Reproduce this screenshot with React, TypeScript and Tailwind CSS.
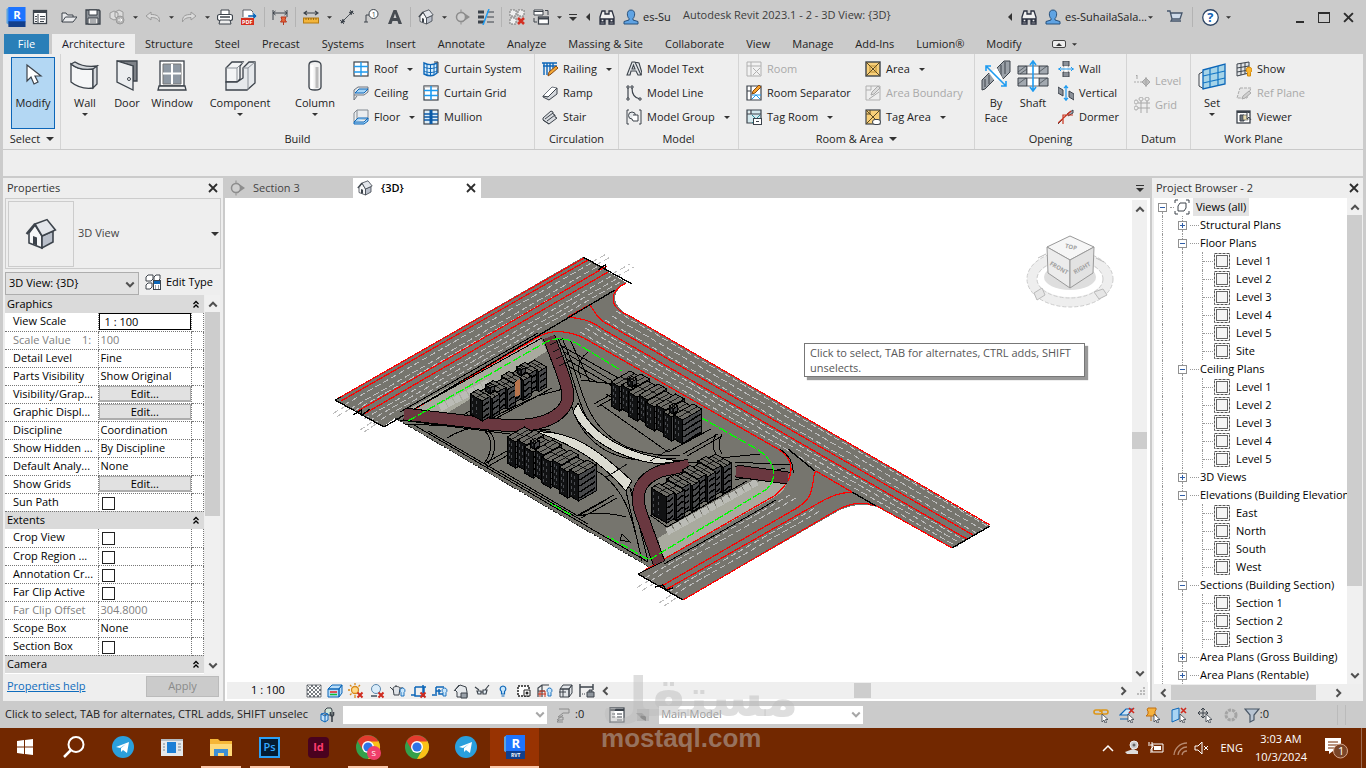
import { Fragment } from 'react';
import type { ReactNode } from 'react';

// --- ICON DRAWINGS (16 unit grid) ---
const ink = '#3c434b';
const blue = '#0c66b8';
const sky = '#1e9bf0';

const arrowCursor = <path d="M9 7v8l2-2 1 3 1.500-.5-1-3h2.500z" fill="#fff" stroke={ink} strokeWidth="0.800" />;
const redCross = <path d="M9.500 9.500l5 5m0-5l-5 5" stroke="#cf2a1e" strokeWidth="2" />;
const bulb = <path d="M12.500 5a2.500 2.500 0 0 1 1.500 4.500V13h-3V9.500A2.500 2.500 0 0 1 12.500 5z" fill="#c9e6fb" stroke={blue} strokeWidth="0.900" />;

const glyphs: Record<string, ReactNode> = {
  palette: <><rect x="1.500" y="1.500" width="13" height="13" fill="#fff" stroke={ink} strokeWidth="1.300" /><path d="M1 3h14" stroke={ink} strokeWidth="2" /><path d="M6 5v9M8 7.500h5M8 10h5M8 12.500h4M3 7.500h2M3 10h2M3 12.500h2" stroke={ink} /></>,
  open: <path d="M1 13V4h4l1.500 2H12v2m-11 5l3.500-5H16l-4 5z" fill="#e9eaec" stroke={ink} />,
  save: <><path d="M1 1h13l1 1v13H1z" fill="#8b9096" stroke={ink} strokeWidth="1.300" /><path d="M4 1h8v5H4z" fill="#fff" stroke={ink} /><path d="M3 9h10v6H3z" fill="#e6e6e6" stroke={ink} /><path d="M5 11h6M5 13h6" stroke={ink} strokeWidth="0.700" /></>,
  sync: <><path d="M1 4l4-2 4 2v5l-4 2-4-2zM6 3l4-2 4 2v5l-4 2-4-2z" fill="#dcdcdc" stroke="#9a9a9a" /><circle cx="11" cy="11" r="4" fill="#b5b5b5" stroke="#999" /><path d="M9 11h4m-1.500-1.500L13 11l-1.500 1.500" stroke="#fff" fill="none" /></>,
  undo: <path d="M1 7l5-4v2.500c5 0 9 1 8.500 7.500C13 9.500 10 8.500 6 8.500V11z" fill="#dadada" stroke="#9b9b9b" />,
  redo: <path d="M15 7l-5-4v2.500c-5 0-9 1-8.500 7.500C3 9.500 6 8.500 10 8.500V11z" fill="#dadada" stroke="#9b9b9b" />,
  print: <><path d="M4 6V1h8v5" fill="#fff" stroke={ink} /><rect x="0.500" y="5.500" width="15" height="6" rx="2" fill="#fff" stroke={ink} strokeWidth="1.200" /><path d="M3 8h10" stroke={ink} strokeWidth="1.500" /><path d="M3 11h10l1 4H2z" fill="#eee" stroke={ink} /></>,
  pdf: <><path d="M2 8V1h8l2 2v5" fill="#fff" stroke={ink} strokeWidth="0.800" /><path d="M7 6h5V3l4 4-4 4V8H7z" fill={blue} stroke="#fff" strokeWidth="0.400" /><rect y="9" width="13" height="7" fill="#d5301f" /><text x="1" y="15" fontSize="5.500" fontWeight="700" fill="#fff">PDF</text></>,
  lock: <><path d="M1 1v10M15 1v7M1 4h14M3.500 2L1 4l2.500 2M12.500 2L15 4l-2.500 2" fill="none" stroke={ink} /><path d="M9 8h5l-1 3 1.500 2h-6L10 11z" fill="#e8663a" stroke="#b6371e" /><path d="M11.500 13v3" stroke="#b6371e" /></>,
  measure: <><path d="M1 4h14M4 2L1 4l3 2M12 2l3 2-3 2" fill="none" stroke={ink} strokeWidth="1.200" /><rect x="0.500" y="9" width="15" height="5" fill="#f3b53b" stroke="#b57b12" /><path d="M3 9v2M5.500 9v2M8 9v2M10.500 9v2M13 9v2" stroke="#7a5207" strokeWidth="0.700" /></>,
  aligned: <path d="M2 14L14 2M1 11l4 4M11 1l4 4M4 10l-2 4 4-1.500M12 6l2-4-4 1.500" fill={ink} stroke={ink} strokeWidth="0.900" />,
  tag: <><circle cx="10.500" cy="5" r="4.500" fill="#fff" stroke={ink} /><text x="8.800" y="7.500" fontSize="7" fill={ink}>1</text><path d="M6 6H3v7M1 13h4" stroke={ink} fill="none" /></>,
  text: <path d="M1 15L6.500 1h3L15 15h-3.500l-1-3h-5l-1 3zM6.500 9h3L8 4.500z" fill="#474c52" />,
  house: <><path d="M2 7.500L5 3.500l3.500 5.500v6L2 12.500z" fill="#f6f7f8" stroke={ink} strokeWidth="0.800" /><path d="M8.500 9l5.500-2.500V12l-5.500 3z" fill="#b9bfca" stroke={ink} strokeWidth="0.800" /><path d="M5 3l6-2.200L15.200 6 8.500 9z" fill="#e3e6eb" stroke={ink} strokeWidth="0.800" /><path d="M0.800 8L5 3" stroke={ink} strokeWidth="1.200" /><path d="M4 9l2 .8v4L4 13z" fill={ink} /></>,
  section: <><path d="M8 2.500L16 8l-8 5.500z" fill="#8d8d8d" /><circle cx="7" cy="8" r="4.500" fill="#cfcfcf" stroke="#8d8d8d" strokeWidth="1.500" /><path d="M7 0.500v3M7 12.500v3" stroke="#8d8d8d" /></>,
  thin: <><path d="M0 3h6M0 8h6M0 13h6" stroke={ink} strokeWidth="3" /><path d="M9 3h7M9 8h7M9 13h7" stroke={ink} /><path d="M11 0L5 16" stroke={sky} strokeWidth="1.500" /></>,
  closeViews: <><path d="M1 1h6v6H1zM9 1h6v6H9zM1 9h6v6H1z" fill="#eee" stroke="#777" strokeDasharray="2 1" /><path d="M9 9l6 6m0-6l-6 6" stroke="#d32f22" strokeWidth="2.500" /></>,
  switchViews: <><path d="M1 1h9v5H1zM1 2.500h9" fill="#fff" stroke={ink} /><rect x="5.500" y="8" width="10" height="7" fill="#fff" stroke={ink} strokeWidth="1.300" /><path d="M5 9.500h11" stroke={ink} strokeWidth="2" /><path d="M12 1.500h3V6M1 9v4h3" fill="none" stroke={ink} /></>,
  binoculars: <path d="M1 8l2-6h3v3h4V2h3l2 6v7h-5v-5H6v5H1zM2 10h3v3H2zM11 10h3v3h-3z" fill="#f0f0f0" stroke="#2b3140" strokeWidth="1.300" />,
  user: <path d="M8 1c5 0 4 7 2 8.500V11l5 1.500V15H1v-2.500L6 11V9.500C4 8 3 1 8 1z" fill="#5fa3e3" stroke="#27507c" />,
  cart: <path d="M0 2h3l2 8h8l2-6H4M5 10l-1 2h10" fill="#cfdbea" stroke="#46566b" strokeWidth="1.300" />,
  help: <><circle cx="8" cy="8" r="7.300" fill="#fff" stroke="#2d4565" strokeWidth="1.200" /><text x="5" y="12.500" fontSize="12" fontWeight="700" fill="#1261b3">?</text></>,
  roof: <><rect x="1" y="1" width="14" height="14" fill="#fff" stroke={ink} strokeWidth="1.200" /><path d="M8 1v14M1 5.500h14M1 11h14" stroke={sky} strokeWidth="1.400" /></>,
  ceiling: <><path d="M1 5l4-3h10v5l-4 3H1zM1 10v5l3-4" fill="#e4e7ea" stroke="#707780" /><path d="M2 8l4-4h9l-4 4z" fill="#a8d6f7" stroke={blue} /></>,
  floor: <><path d="M4 1h11v9H4zM4 1L1 4v9" fill="#e9ecef" stroke="#838a92" /><path d="M1 13l4-4h10l-4 4zM1 13v2h10l4-3V9" fill="#a8d6f7" stroke={blue} /></>,
  curtainSystem: <><path d="M1 2c4 2 9 2 13 0v10c-4 4-9 3-13 1z" fill="#d8effd" stroke={blue} strokeWidth="1.400" /><path d="M4 3v12M7.500 3v12M11 3v11M1 6c4 2 9 2 13 0M1 10c4 2 9 2 13 0" stroke={blue} fill="none" /><path d="M11 1h4v11" stroke={ink} fill="none" /></>,
  curtainGrid: <><rect x="1" y="1" width="14" height="14" fill="#fff" stroke={ink} strokeWidth="1.200" /><path d="M1 2h14" stroke="#bbb" /><path d="M8 1v14M1 5.500h14M1 10.500h14" stroke={sky} strokeWidth="1.600" /></>,
  mullion: <><rect x="1" y="1" width="14" height="14" fill="#dceefa" stroke={ink} strokeWidth="1.200" /><path d="M8 1v14" stroke="#0b5aa6" strokeWidth="3" /><path d="M1 5h14M1 8h14M1 11h14" stroke="#0b5aa6" strokeWidth="1.400" /></>,
  railing: <><path d="M0 2h15M1 5h14M2 2v12M5 2v12M8 2v12M11 2v6" stroke={blue} strokeWidth="1.400" /><path d="M6 15l1-4 7-6 2 2-7 6z" fill="#f4a836" stroke="#8c4b11" /></>,
  ramp: <><path d="M1 11l9-9 5 1-9 9z" fill="#fff" stroke="#6c737b" /><path d="M6 12l9-9v6l-8 6-6-3v-1z" fill="#d6d9dd" stroke={ink} /></>,
  stair: <><path d="M1 9l8-7 2 1v2l2 1v2l2 1-8 6-6-4z" fill="#d9dce0" stroke={ink} /><path d="M3 10l8-6M5 12l8-6M1 11l6 4" stroke={ink} fill="none" /></>,
  modelText: <path d="M1 14L6 1h3l6 13h-3l-2-4H5l-1 4zM6 8h3L7.500 4zM9 1l4 1 3 10-1 2" fill="#e5e8eb" stroke={ink} strokeWidth="1.100" />,
  modelLine: <><path d="M2 3v11M6 3c0 6 2 10 8 11" stroke={ink} fill="none" strokeWidth="1.200" /><path d="M1 1h2v2H1zM1 13h2v2H1zM5 1h2v2H5zM13 13h2v2h-2z" fill="#fff" stroke={ink} /></>,
  modelGroup: <><path d="M3 1H1v14h2M13 1h2v14h-2" stroke={ink} fill="none" /><circle cx="6" cy="6.500" r="3.500" fill="#e5e8eb" stroke={ink} /><path d="M7 6h5v6H7l-1-2" fill="#fff" stroke={ink} /></>,
  roomOff: <><path d="M1 1h14v14H1zM1 5h4V1M5 5h10M5 5v10" fill="#f2f2f2" stroke="#b0b0b0" /><path d="M7 7l7 7m0-7l-7 7" stroke="#b0b0b0" /></>,
  roomSep: <><path d="M1 1h14v14H1zM5 1v14M1 6h4" fill="#fff" stroke={ink} strokeWidth="1.200" /><path d="M6 14l4-4 4 4M6 10h9" stroke={sky} fill="none" /><path d="M6 9l1-3 6-6 2 2-6 6z" fill="#f6a22c" stroke="#8a4a10" /></>,
  tagRoom: <><path d="M1 1h14v13H1zM1 5h4V1M5 5h10" fill="#d4e9ee" stroke={ink} strokeWidth="1.200" /><path d="M6 6l6 6m2-6l-8 8" stroke="#2a8b97" /><rect x="7.500" y="9.500" width="8" height="6" fill="#fff" stroke={ink} /><path d="M10 12.500h3" stroke={ink} /></>,
  area: <><rect x="1" y="1" width="14" height="14" fill="#f8cf78" stroke={ink} strokeWidth="1.400" /><path d="M1 1l14 14m0-14L1 15" stroke="#5c4a25" /><path d="M5 5h6v6H5z" fill="none" stroke="#a37416" strokeWidth="0.700" /></>,
  areaOff: <><path d="M1 1h14v14H1zM1 5h5V1" fill="#eee" stroke="#b0b0b0" /><path d="M6 10l1-3 6-6 2 2-6 6zM4 14l10-7" fill="#ddd" stroke="#aaa" /></>,
  tagArea: <><rect x="1" y="1" width="14" height="14" fill="#f8cf78" stroke={ink} strokeWidth="1.200" /><path d="M1 1l14 14m0-14L1 15M5 1v4H1" stroke="#5c4a25" fill="none" /><rect x="7.500" y="10.500" width="8" height="5" rx="2.500" fill="#fff" stroke={ink} /></>,
  openWall: <><path d="M5 0h6v5H5zM5 11h6v5H5z" fill="#8b9199" stroke={ink} /><path d="M6 5h4v6H6z" fill="#fff" stroke="#bbb" strokeWidth="0.500" /><path d="M0 8h16M3 6L1 8l2 2M13 6l2 2-2 2" stroke={sky} fill="none" /></>,
  vertical: <><path d="M0 2l5 3v6L0 8zM11 6l5 3v6l-5-3z" fill="#8b9199" stroke={ink} /><path d="M8 0v16M6 3l2-2 2 2M6 13l2 2 2-2" stroke={sky} fill="none" strokeWidth="1.200" /></>,
  dormer: <><path d="M0 15l5-5M9 5l6-4v3l-5 3" stroke={ink} fill="#aab" /><path d="M5 15V6h10M0 14L13 2" stroke="#c9341f" strokeWidth="1.200" fill="none" /></>,
  level: <><path d="M0 9h9" stroke="#aaa" strokeDasharray="2 1" /><path d="M12 5l4 4-4 4-4-4z" fill="#bdbdbd" stroke="#a5a5a5" /><path d="M3 2v4M2 3l1-1M12 4v10" stroke="#a5a5a5" /></>,
  grid: <path d="M2 3a2 2 0 1 0 .1 0zM2 9a2 2 0 1 0 .1 0zM7 0a2 2 0 1 0 .1 0zM13 0a2 2 0 1 0 .1 0zM4 6h12M4 11h12M7 4v12M13 4v12" fill="none" stroke="#a8a8a8" />,
  show: <><path d="M1 3l12-2v11L1 15zM5 2v12M9 2v11M1 7l12-2M1 11l12-2" fill="#e2e5e8" stroke={ink} /><path d="M13 6a3 3 0 0 1 1.500 5.500V15h-3v-3.500A3 3 0 0 1 13 6z" fill="#fbb52e" stroke="#d58a09" /></>,
  refPlane: <><path d="M4 3h11l-4 10H1z" fill="#e6e6e6" stroke="#ababab" strokeDasharray="3 1" /><path d="M6 14l1-3 6-5 2 2-6 5z" fill="#d0d0d0" stroke="#aaa" /></>,
  viewer: <><rect x="1" y="2" width="13" height="12" fill="#fff" stroke={ink} strokeWidth="1.300" /><path d="M1 3h13" stroke={ink} strokeWidth="2" /><path d="M4 6h4v6H4z" fill="#69717a" stroke={ink} /><path d="M7 6h5v5H7z" fill="#e8dcb0" stroke={ink} strokeWidth="0.600" /><path d="M11 3v7l2-2 2 3" fill="#fff" stroke={ink} /></>,
  editType: <><path d="M1 3l2-2h5v4L6 7H1zM9 3l2-2h4v4l-2 2H9zM1 11l2-2h4v4l-2 2H1z" fill="#fff" stroke={ink} /><rect x="8.500" y="6.500" width="7" height="9" fill="#fff" stroke={ink} /><path d="M9 7h6v3H9z" fill={blue} /><path d="M10 12h1m2 0h1m-4 2h1m2 0h1" stroke={ink} /></>,
  detail: <path d="M1 2h14v12H1zM1 2l12 12M5 2l10 10M9 2l6 6M1 6l8 8M1 10l4 4M15 2L3 14M11 2L1 12M7 2L1 8M15 6l-8 8M15 10l-4 4" fill="#fff" stroke={ink} strokeWidth="0.700" />,
  style: <><path d="M1 6l4-4h10l-3 4zM1 6h11v8H1zM12 6l3-4v8l-3 4z" fill="#b8dcf7" stroke={blue} /><path d="M3 9h7" stroke="#e22" strokeWidth="1.500" /><path d="M3 11.500h7" stroke="#1b3" strokeWidth="1.500" /></>,
  sun: <><circle cx="7" cy="7" r="3.500" fill="#ffd98a" stroke="#d8891a" strokeWidth="1.300" /><path d="M7 0v2M7 12v3M0 7h2M2 2l1.500 1.500M12 2l-1.500 1.500M2 12l1.500-1.500" stroke="#d8891a" strokeWidth="1.300" />{redCross}</>,
  shadow: <><circle cx="7" cy="6" r="4.500" fill="#d9ecfa" stroke="#5b87ad" /><path d="M2 13h6" stroke="#6c7782" strokeWidth="2" />{redCross}</>,
  render: <><path d="M3 5c1-2 6-2 7 0l-1 7H4zM0 4l4 4M10 5h3M6 2v2" fill="#e1e4e8" stroke={ink} />{bulb}</>,
  crop: <><path d="M4 4h11M4 4v9h9V4M0 12h4M12 14V2" fill="none" stroke={blue} strokeWidth="1.500" />{redCross}</>,
  cropShow: <><path d="M4 4h8M4 4v9M7 6v5h4M0 12h3M4 8h5" fill="none" stroke={blue} strokeWidth="1.500" />{bulb}</>,
  lock3d: <><path d="M2 7l5-5 6 2 1 5v5H4V9z" fill="#e5e8eb" stroke={ink} /><path d="M1 8l5-6" stroke={ink} /><path d="M8 10h6v5H8z" fill="#9aa1a9" stroke={ink} /></>,
  glasses: <path d="M1 4l4 3m6 0l4-5M3 8h4v3H4zM9 7h4l-1 4H9zM7 9h2" fill="#e7f1f8" stroke={ink} strokeWidth="1.200" />,
  bulbOnly: <path d="M8 3a3 3 0 0 1 1.500 5.500V11h-3V8.500A3 3 0 0 1 8 3zM6.500 13h3" fill="#c9e6fb" stroke={blue} strokeWidth="1.200" />,
  temp: <><path d="M2 3h11v10H2z" fill="#fff" stroke="#222" strokeWidth="1.500" strokeDasharray="2 1" /><path d="M8 7h6v6H8z" fill="#fff" stroke="#222" /><circle cx="11" cy="10" r="1.500" fill="#222" /></>,
  analytic: <><path d="M1 14V5l4-3h7M5 2v12M1 8h7" stroke={ink} fill="none" strokeWidth="1.200" /><path d="M3 14V8h5v6M1 11h8" stroke="#c9341f" fill="none" />{bulb}</>,
  displace: <path d="M2 6l3-4h9l-3 4zM2 6h9v8H2zM11 6l3-4v8l-3 4zM5 6v8M1 9h7" fill="#e2e5e8" stroke={ink} />,
  constraint: <><path d="M1 1v13M14 1v6M1 4h13" stroke={ink} strokeWidth="1.400" fill="none" /><path d="M3 11h4" stroke={ink} strokeDasharray="1 1" /><path d="M8 9h7v5H8zM10 9V7h3v2" fill="#8f969d" stroke={ink} /></>,
  worksets: <><path d="M5 3l2-2h4l1 2v5H5z" fill="#cfe3d8" stroke={ink} /><path d="M1 7l4-1 3 1v6l-3 2-4-2zM1 7l4 2 3-2M5 9v6" fill="#c6e3f8" stroke={blue} /><path d="M10.500 5v3l1.500 1.500L13.500 8V5M12 9.500V15" fill="none" stroke={ink} strokeWidth="1.600" /></>,
  requests: <path d="M4 2h10v4H8L3 10h5v3H2l6-5M4 13l-2 2h6" fill="#c9c9c9" stroke="#8b8b8b" />,
  options: <><rect x="1" y="1" width="14" height="14" fill="#fff" stroke={ink} strokeWidth="1.200" /><path d="M1 3h14" stroke={ink} strokeWidth="2" /><path d="M3 7h3M3 10h3M8 7h5M8 10h5M8 13h5" stroke={ink} strokeWidth="1.200" /></>,
  pick: <><path d="M2 2h12v12H2z" fill="#b7b7b7" /><path d="M1 6h6l4 4v4l-4-2z" fill="#8e8e8e" /></>,
  links: <><path d="M1 5a2 2 0 0 1 2-2h4a2 2 0 0 1 0 4H3a2 2 0 0 1-2-2zM7 5a2 2 0 0 1 2-2h4a2 2 0 0 1 0 4H9" fill="none" stroke="#dd9618" strokeWidth="1.600" />{arrowCursor}</>,
  underlay: <><path d="M1 8l6-6h6l-4 6zM1 12h9" fill="#cfe6f7" stroke={blue} strokeWidth="1.200" /><path d="M10 1l5 5m0-5l-5 5" stroke="#cf2a1e" strokeWidth="1.600" />{arrowCursor}</>,
  pinned: <><path d="M3 1h8v2l-1 1v3l2 2H1l2-2V4L2 3zM6 9v5" fill="#f5b13c" stroke="#c06f12" />{arrowCursor}</>,
  byFace: <><path d="M1 3l7-2v11l-7 3z" fill="#a9d4f3" stroke={blue} /><path d="M10 1l5 5m0-5l-5 5" stroke="#cf2a1e" strokeWidth="1.600" />{arrowCursor}</>,
  drag: <><path d="M6 1v10M1 6h10M4 3l2-2 2 2M4 9l2 2 2-2M3 4L1 6l2 2M9 4l2 2-2 2" fill="none" stroke={ink} />{arrowCursor}</>,
  gear: <circle cx="8" cy="8" r="5" fill="none" stroke="#a4a4a4" strokeWidth="3" strokeDasharray="3 1" />,
  filter: <path d="M1 2h14l-5 6v5l-4 2V8z" fill="#b8c4d2" stroke="#4b5867" strokeWidth="1.200" />,
  browser: <><path d="M4 1H1v3M12 1h3v3M4 15H1v-3M12 15h3v-3" fill="none" stroke={ink} /><path d="M4 7l2-3h6v5l-2 3H4z" fill="#fff" stroke={ink} /></>,
  sheet: <><rect x="0.500" y="0.500" width="15" height="15" fill="none" stroke="#555" strokeDasharray="3 1" /><rect x="2.500" y="2.500" width="11" height="11" fill="#f5f5f5" stroke="#666" /></>,
};

function Ico({ name, className = 'size-4' }: { name: string; className?: string }) {
  return (
    <svg viewBox="0 0 16 16" className={`${className} shrink-0`} fill="none" aria-hidden="true">
      {glyphs[name]}
    </svg>
  );
}

// --- LARGE RIBBON DRAWINGS (32 unit grid) ---
const bigGlyphs: Record<string, ReactNode> = {
  modify: <path d="M10 5v16l4-4 3 7 4-2-3-6h6z" fill="#fff" stroke={ink} strokeWidth="1.200" />,
  wall: <><path d="M2 4c6 5 14 6 22 5v19C16 29 8 27 2 22z" fill="#f5f6f7" stroke={ink} strokeWidth="1.300" /><path d="M2 4l4-2c6 4 14 5 22 4l-4 3C16 10 8 9 2 4zM24 9l4-3v18l-4 4z" fill="#d5d8dc" stroke={ink} strokeWidth="1.300" /></>,
  door: <><path d="M6 1h20v20h-4V6L6 1z" fill="#7d8187" stroke={ink} strokeWidth="1.300" /><path d="M6 1l16 5v24L6 22z" fill="#eceef0" stroke={ink} strokeWidth="1.300" /><circle cx="18" cy="19" r="1.500" fill="#fff" stroke={ink} /></>,
  window: <><rect x="4" y="1" width="24" height="25" fill="#fff" stroke={ink} strokeWidth="1.300" /><path d="M7 4h18v20H7z" fill="#8e98a3" stroke="#777" /><path d="M16 4v20M7 13.500h18" stroke="#fff" strokeWidth="2" /><path d="M3 26h26l1 4H2z" fill="#eee" stroke={ink} strokeWidth="1.300" /></>,
  component: <><path d="M2 8l6-6h11l-3 4v13l-3 3H2z" fill="#f3f4f5" stroke={ink} strokeWidth="1.300" /><path d="M19 8l6-6h6v21l-8 7H2v-8h11l6-4z" fill="#e6e9ec" stroke={ink} strokeWidth="1.300" /><path d="M2 8h11v13M19 8h5v22M24 8l7-6M13 8l6-6" fill="none" stroke="#8c9299" /></>,
  column: <><path d="M10 5v22c0 4 12 4 12 0V5c0-5-12-5-12 0z" fill="#f1f1f1" stroke={ink} strokeWidth="1.300" /><path d="M13 5v24" stroke="#fff" strokeWidth="3" /><path d="M18 7v21" stroke="#bbb" strokeWidth="3" /></>,
  byFace: <><path d="M2 30V20l7-7 6 6-10 10zM17 8l7-7h6v11l-7 7z" fill="#9ba1a8" stroke={ink} /><path d="M5 19v8M9 15v9M21 5v11M25 2v12" stroke={ink} /><path d="M9 13l8-5 6 11-8 2z" fill="#fff" /><path d="M6 6l20 20M6 11V6h5M21 26h5v-5" stroke={sky} strokeWidth="1.600" fill="none" /></>,
  shaft: <><path d="M1 6h9v8H1zM22 6h9v8h-9zM1 18h9v8H1zM22 18h9v8h-9z" fill="#a3a9b0" stroke={ink} /><path d="M10 6h12v8H10zM10 18h12v8H10z" fill="#fff" stroke={ink} strokeWidth="0.800" /><path d="M1 12l8-6M3 14l7-5M22 12l8-6M1 24l8-6M22 24l8-6" stroke={ink} strokeWidth="0.700" /><path d="M16 1v30M13 5l3-4 3 4M13 27l3 4 3-4" fill="none" stroke={sky} strokeWidth="1.600" /></>,
  set: <><path d="M3 14l5-3v18l-5-3z" fill="#f4f4f4" stroke={ink} /><path d="M7 10l22-6v20L7 29z" fill="#a6d4e8" stroke={blue} strokeWidth="1.300" /><path d="M14 8v19M22 6v20M7 16l22-5M7 23l22-5" stroke="#1275c4" strokeWidth="1.200" /></>,
};

function Caret({ className = 'h-[3px] w-[6px]' }: { className?: string }) {
  return (
    <svg viewBox="0 0 6 3" className={`${className} shrink-0`} aria-hidden="true">
      <path d="M0 0h6L3 3z" fill="#333" />
    </svg>
  );
}

function BigTool({ icon, label, width, caret, active }: { icon: string; label: string; width: string; caret?: boolean; active?: boolean }) {
  return (
    <button className={`${width} ${active ? 'border-[#0c66b8] bg-[#b3d7f3]' : 'border-transparent'} flex h-[72px] shrink-0 flex-col items-center border pt-0.5 leading-[15px]`}>
      <svg viewBox="0 0 32 32" className="size-8 shrink-0" fill="none" aria-hidden="true">{bigGlyphs[icon]}</svg>
      <span className="mt-[3px] w-min whitespace-pre">{label}</span>
      {caret && <Caret className="mt-[3px] h-[3px] w-[6px]" />}
    </button>
  );
}

type Tool = { icon: string; label: string; caret?: boolean; off?: boolean };

function ToolColumn({ tools, className = '' }: { tools: Tool[]; className?: string }) {
  return (
    <div className={`${className} flex shrink-0 flex-col`}>
      {tools.map((t) => (
        <button key={t.label} disabled={t.off} className="flex h-6 items-center gap-[5px] whitespace-nowrap disabled:text-[#a9a9a9]">
          <Ico name={t.icon} />
          <span>{t.label}</span>
          {t.caret && <span className="pl-1"><Caret /></span>}
        </button>
      ))}
    </div>
  );
}

function Panel({ title, className, caret, children }: { title: string; className: string; caret?: boolean; children: ReactNode }) {
  return (
    <section className={`${className} flex shrink-0 flex-col border-r border-[#d4d4d4]`}>
      <div className="flex h-[77px] items-start pt-[3px]">{children}</div>
      <h2 className="flex h-4 items-center justify-center gap-1.5">{title}{caret && <Caret className="h-1 w-2" />}</h2>
    </section>
  );
}

// --- TITLE BAR ---
const quickTools = ['palette', '>', 'open', 'save', 'sync', 'v', 'undo', 'v', 'redo', 'v', 'print', 'pdf', '|', 'lock', '|', 'measure', 'v', 'aligned', 'tag', 'text', '|', 'house', 'v', 'section', 'thin', '|', 'closeViews', 'switchViews', 'v'];

function QuickItem({ kind }: { kind: string }) {
  if (kind === '>') return <span className="w-[5px] shrink-0" />;
  if (kind === '|') return <span className="flex w-[7px] shrink-0 justify-center"><span className="h-5 w-px bg-[#b3b3b3]" /></span>;
  if (kind === 'v') return <button aria-label="More" className="flex h-6 w-3 shrink-0 items-center justify-center"><Caret className="h-[3px] w-[5px]" /></button>;
  return <button aria-label={kind} className="flex size-6 shrink-0 items-center justify-center"><Ico name={kind} /></button>;
}

function RevitLogo({ className = 'size-5' }: { className?: string }) {
  return (
    <svg viewBox="0 0 20 21" className={className} aria-hidden="true">
      <path d="M0 2l3-2v19l-3-2z" fill="#5ba3e0" />
      <path d="M2 0h18v16H2z" fill="#1d74ff" />
      <path d="M2 15h18v6H2z" fill="#123f8c" />
      <text x="7" y="12.500" fontSize="12" fontWeight="700" fill="#fff">R</text>
    </svg>
  );
}

function LeftCaret() {
  return <svg viewBox="0 0 4 8" className="h-2 w-1" aria-hidden="true"><path d="M4 0v8L0 4z" fill="#333" /></svg>;
}

function TitleBar() {
  return (
    <header className="flex h-[34px] shrink-0 items-center pl-1">
      <button aria-label="Revit" className="flex size-6 shrink-0 items-center justify-center"><RevitLogo /></button>
      {quickTools.map((k, i) => <QuickItem key={i} kind={k} />)}
      <button aria-label="Customize" className="flex h-6 w-4 shrink-0 flex-col items-center justify-center gap-0.5"><span className="h-px w-2 bg-[#333]" /><Caret className="h-1 w-2" /></button>
      <button aria-label="Collapse" className="flex h-6 w-3.5 shrink-0 items-center justify-center"><LeftCaret /></button>
      <QuickItem kind="binoculars" />
      <QuickItem kind="user" />
      <span className="w-7 shrink-0 whitespace-nowrap">es-Su</span>
      <h1 className="mb-1 ml-3 whitespace-nowrap text-[#3c3c3c]">Autodesk Revit 2023.1 - 2 - 3D View: {'{3D}'}</h1>
      <div className="ml-auto flex items-center pr-1.5">
        <button aria-label="Collapse" className="flex h-6 w-3.5 items-center justify-center"><LeftCaret /></button>
        <QuickItem kind="binoculars" />
        <QuickItem kind="user" />
        <button className="flex h-6 items-center whitespace-nowrap">es-SuhailaSala...<Caret className="ml-px h-[3px] w-[5px]" /></button>
        <span className="ml-2.5 flex"><QuickItem kind="cart" /></span>
        <span className="mx-0.5 flex items-center"><QuickItem kind="|" /></span>
        <button aria-label="Help" className="flex size-6 items-center justify-center"><Ico name="help" className="size-[17px]" /></button>
        <QuickItem kind="v" />
        <div className="ml-[54px] flex items-center text-[#2d2d2d]">
          <button aria-label="Minimize" className="flex size-6 items-center justify-center"><span className="mt-2.5 h-0.5 w-2 bg-[#2d2d2d]" /></button>
          <button aria-label="Maximize" className="flex size-6 items-center justify-center"><span className="h-[11px] w-3 border border-t-2 border-[#2d2d2d]" /></button>
          <button aria-label="Close" className="flex size-6 items-center justify-center"><Cross className="size-[11px]" /></button>
        </div>
      </div>
    </header>
  );
}

function Cross({ className = 'size-2.5' }: { className?: string }) {
  return <svg viewBox="0 0 10 10" className={className} aria-hidden="true"><path d="M1 1l8 8m0-8L1 9" stroke="#2d2d2d" strokeWidth="1.800" /></svg>;
}

const ribbonTabs = ['Structure', 'Steel', 'Precast', 'Systems', 'Insert', 'Annotate', 'Analyze', 'Massing & Site', 'Collaborate', 'View', 'Manage', 'Add-Ins', 'Lumion®', 'Modify'];

function Ribbon() {
  return (
    <>
      <nav className="flex h-5 shrink-0 items-stretch pl-1">
        <button className="w-[45px] bg-[#2a7fb8] text-white">File</button>
        <button className="ml-[3px] w-[83px] bg-[#eee] text-[#1b1b2b]">Architecture</button>
        <div className="flex gap-0.5">
          {ribbonTabs.map((t) => <button key={t} className="whitespace-nowrap px-2.5">{t}</button>)}
        </div>
        <button aria-label="Ribbon display" className="ml-5 flex items-center gap-1.5">
          <span className="flex h-2 w-3.5 items-center justify-center rounded-[2px] border border-[#444] bg-[#eee]"><svg viewBox="0 0 6 3" className="h-[3px] w-[6px]"><path d="M0 3h6L3 0z" fill="#333" /></svg></span>
          <Caret className="h-[3px] w-[5px]" />
        </button>
      </nav>
      <div className="mx-[3px] flex h-[96px] shrink-0 overflow-hidden border-b border-[#c9c9c9] bg-[#eee] pl-px">
        <Panel title="Select" caret className="w-[57px]">
          <BigTool icon="modify" label="Modify" width="ml-[7px] w-11" active />
        </Panel>
        <Panel title="Build" className="w-[474px]">
          <BigTool icon="wall" label="Wall" width="ml-1 w-10" caret />
          <BigTool icon="door" label="Door" width="w-11" />
          <BigTool icon="window" label="Window" width="w-[46px]" />
          <BigTool icon="component" label="Component" width="ml-2.5 w-[70px]" caret />
          <BigTool icon="column" label="Column" width="ml-2.5 w-[60px]" caret />
          <ToolColumn className="ml-2 w-[70px]" tools={[{ icon: 'roof', label: 'Roof', caret: true }, { icon: 'ceiling', label: 'Ceiling' }, { icon: 'floor', label: 'Floor', caret: true }]} />
          <ToolColumn tools={[{ icon: 'curtainSystem', label: 'Curtain System' }, { icon: 'curtainGrid', label: 'Curtain Grid' }, { icon: 'mullion', label: 'Mullion' }]} />
        </Panel>
        <Panel title="Circulation" className="w-[84px]">
          <ToolColumn className="ml-[7px]" tools={[{ icon: 'railing', label: 'Railing', caret: true }, { icon: 'ramp', label: 'Ramp' }, { icon: 'stair', label: 'Stair' }]} />
        </Panel>
        <Panel title="Model" className="w-[120px]">
          <ToolColumn className="ml-[7px]" tools={[{ icon: 'modelText', label: 'Model Text' }, { icon: 'modelLine', label: 'Model Line' }, { icon: 'modelGroup', label: 'Model Group', caret: true }]} />
        </Panel>
        <Panel title="Room & Area" caret className="w-[236px]">
          <ToolColumn className="ml-[7px] w-[119px]" tools={[{ icon: 'roomOff', label: 'Room', off: true }, { icon: 'roomSep', label: 'Room Separator' }, { icon: 'tagRoom', label: 'Tag Room', caret: true }]} />
          <ToolColumn tools={[{ icon: 'area', label: 'Area', caret: true }, { icon: 'areaOff', label: 'Area Boundary', off: true }, { icon: 'tagArea', label: 'Tag Area', caret: true }]} />
        </Panel>
        <Panel title="Opening" className="w-[152px]">
          <BigTool icon="byFace" label={'By\nFace'} width="ml-[3px] w-9 text-center" />
          <BigTool icon="shaft" label="Shaft" width="w-[38px]" />
          <ToolColumn className="ml-1.5" tools={[{ icon: 'openWall', label: 'Wall' }, { icon: 'vertical', label: 'Vertical' }, { icon: 'dormer', label: 'Dormer' }]} />
        </Panel>
        <Panel title="Datum" className="w-16">
          <ToolColumn className="ml-[7px] mt-3" tools={[{ icon: 'level', label: 'Level', off: true }, { icon: 'grid', label: 'Grid', off: true }]} />
        </Panel>
        <section className="flex w-[125px] shrink-0 flex-col">
          <div className="flex h-[77px] items-start pt-[3px]">
            <BigTool icon="set" label="Set" width="ml-1 w-[34px]" caret />
            <ToolColumn className="ml-[7px]" tools={[{ icon: 'show', label: 'Show' }, { icon: 'refPlane', label: 'Ref Plane', off: true }, { icon: 'viewer', label: 'Viewer' }]} />
          </div>
          <h2 className="h-4 text-center leading-4">Work Plane</h2>
        </section>
      </div>
      <div className="mx-[3px] mb-0.5 h-[26px] shrink-0 bg-[#eee]" />
    </>
  );
}

// --- PROPERTIES PALETTE ---
type PropRow = { name: string; kind: 'head' | 'input' | 'text' | 'edit' | 'check'; value?: string; muted?: boolean };

const propRows: PropRow[] = [
  { name: 'Graphics', kind: 'head' },
  { name: 'View Scale', kind: 'input', value: '1 : 100' },
  { name: 'Scale Value    1:', kind: 'text', value: '100', muted: true },
  { name: 'Detail Level', kind: 'text', value: 'Fine' },
  { name: 'Parts Visibility', kind: 'text', value: 'Show Original' },
  { name: 'Visibility/Grap...', kind: 'edit' },
  { name: 'Graphic Displ...', kind: 'edit' },
  { name: 'Discipline', kind: 'text', value: 'Coordination' },
  { name: 'Show Hidden ...', kind: 'text', value: 'By Discipline' },
  { name: 'Default Analy...', kind: 'text', value: 'None' },
  { name: 'Show Grids', kind: 'edit' },
  { name: 'Sun Path', kind: 'check' },
  { name: 'Extents', kind: 'head' },
  { name: 'Crop View', kind: 'check' },
  { name: 'Crop Region ...', kind: 'check' },
  { name: 'Annotation Cr...', kind: 'check' },
  { name: 'Far Clip Active', kind: 'check' },
  { name: 'Far Clip Offset', kind: 'text', value: '304.8000', muted: true },
  { name: 'Scope Box', kind: 'text', value: 'None' },
  { name: 'Section Box', kind: 'check' },
  { name: 'Camera', kind: 'head' },
];

function Chevron({ dir, className = 'size-2' }: { dir: 'up' | 'down' | 'left' | 'right'; className?: string }) {
  const paths = { up: 'M1 6l3-3 3 3', down: 'M1 2l3 3 3-3', left: 'M6 1L3 4l3 3', right: 'M2 1l3 3-3 3' };
  return <svg viewBox="0 0 8 8" className={className} aria-hidden="true"><path d={paths[dir]} fill="none" stroke="#505050" strokeWidth="1.600" /></svg>;
}

function PropValue({ row }: { row: PropRow }) {
  if (row.kind === 'input') return <input aria-label={row.name} defaultValue={row.value} className="block h-[17px] w-full border border-black bg-white pl-[5px]" />;
  if (row.kind === 'edit') return <button className="block h-4 w-full border border-b-2 border-[#adadad] bg-[#e1e1e1] leading-[13px]">Edit...</button>;
  if (row.kind === 'check') return <input type="checkbox" aria-label={row.name} className="mt-[3px] ml-[3px] block size-[13px] appearance-none border border-[#222] bg-white" />;
  return <span className="pl-0.5">{row.value}</span>;
}

function Properties() {
  return (
    <aside className="flex w-[220px] shrink-0 flex-col bg-[#eee]">
      <div className="flex h-5 shrink-0 items-center justify-between pr-[5px] pl-1 text-[#333]">
        <h2>Properties</h2>
        <button aria-label="Close properties"><Cross /></button>
      </div>
      <button className="mx-0.5 flex h-[71px] shrink-0 items-center border border-[#ccc] p-0.5 pr-0 text-left text-[#444]">
        <span className="flex size-[66px] items-center justify-center border border-[#ccc]"><Ico name="house" className="size-8" /></span>
        <span className="ml-1 flex-1">3D View</span>
        <Caret className="mr-px h-1 w-2" />
      </button>
      <div className="mt-0.5 flex h-6 shrink-0 items-center pl-0.5">
        <div className="relative">
          <select aria-label="Instance filter" className="h-[23px] w-[134px] appearance-none border border-[#adadad] bg-[#e1e1e1] pl-[3px]">
            <option>3D View: {'{3D}'}</option>
          </select>
          <Chevron dir="down" className="pointer-events-none absolute top-2 right-1 size-2.5" />
        </div>
        <button className="mb-0.5 ml-1.5 flex items-center gap-[5px] whitespace-nowrap"><Ico name="editType" />Edit Type</button>
      </div>
      <div className="ml-0.5 flex min-h-0 flex-1 overflow-hidden">
        <div className="w-[199px] overflow-hidden bg-white">
          <table className="w-full table-fixed border-collapse leading-[16px]">
            <colgroup><col className="w-[93px]" /><col /><col className="w-3" /></colgroup>
            <tbody>
              {propRows.map((row) => row.kind === 'head' ? (
                <tr key={row.name} className="h-[18px] bg-[#dadada]">
                  <th colSpan={3} className="p-0 text-left font-normal">
                    <span className="flex items-center justify-between pr-1 pl-0.5">
                      {row.name}
                      <svg viewBox="0 0 8 8" className="size-2"><path d="M1.500 4L4 1.500 6.500 4M1.500 7.500L4 5l2.500 2.500" fill="none" stroke="#000" strokeWidth="1.300" /></svg>
                    </span>
                  </th>
                </tr>
              ) : (
                <tr key={row.name} className={row.muted ? 'h-[18px] align-top text-[#808080]' : 'h-[18px] align-top'}>
                  <td className="overflow-hidden border-r border-b border-dotted border-[#777] p-0 pl-2 whitespace-pre">{row.name}</td>
                  <td className="border-r border-b border-dotted border-[#777] p-0"><PropValue row={row} /></td>
                  <td className="border-r border-b border-dotted border-[#777] p-0" />
                </tr>
              ))}
            </tbody>
          </table>
        </div>
        <div className="ml-px flex w-[15px] flex-col items-center bg-[#f0f0f0]">
          <span className="flex h-[17px] items-center"><Chevron dir="up" className="size-2.5" /></span>
          <div className="flex w-full flex-1"><div className="h-[59%] w-full bg-[#cdcdcd]" /></div>
          <span className="flex h-[17px] items-center"><Chevron dir="down" className="size-2.5" /></span>
        </div>
      </div>
      <div className="flex h-[27px] shrink-0 items-start justify-between pt-0.5 pr-1 pl-1">
        <a href="#help" className="pt-0.5 text-[#0f6cbd] underline">Properties help</a>
        <button disabled className="h-[21px] w-[73px] border border-[#bbb] bg-[#cbcbcb] text-[#8a8a8a]">Apply</button>
      </div>
    </aside>
  );
}

// --- PROJECT BROWSER ---
type Node = { level: 0 | 1 | 2; label: string; open?: boolean };

const group = (label: string, items: string[]): Node[] => [
  { level: 1, label, open: items.length > 0 },
  ...items.map((i): Node => ({ level: 2, label: i })),
];

const browserNodes: Node[] = [
  { level: 0, label: 'Views (all)', open: true },
  ...group('Structural Plans', []),
  ...group('Floor Plans', ['Level 1', 'Level 2', 'Level 3', 'Level 4', 'Level 5', 'Site']),
  ...group('Ceiling Plans', ['Level 1', 'Level 2', 'Level 3', 'Level 4', 'Level 5']),
  ...group('3D Views', []),
  ...group('Elevations (Building Elevation)', ['East', 'North', 'South', 'West']),
  ...group('Sections (Building Section)', ['Section 1', 'Section 2', 'Section 3']),
  ...group('Area Plans (Gross Building)', []),
  ...group('Area Plans (Rentable)', []),
];

function Guide() {
  return <span className="flex h-[18px] w-4 shrink-0 justify-center"><span className="w-px border-l border-dotted border-[#999]" /></span>;
}

function Toggle({ open, root }: { open?: boolean; root?: boolean }) {
  return (
    <span className="flex h-[18px] w-4 shrink-0 flex-col items-center">
      <span className={root ? 'h-[5px]' : 'h-[5px] w-px border-l border-dotted border-[#999]'} />
      <button aria-label={open ? 'Collapse' : 'Expand'} className="block size-[9px] border border-[#919191] bg-white">
        <svg viewBox="0 0 7 7" className="size-[7px]"><path d={open ? 'M1 3.500h5' : 'M1 3.500h5M3.500 1v5'} stroke="#2f5ea8" /></svg>
      </button>
      <span className="w-px flex-1 border-l border-dotted border-[#999]" />
    </span>
  );
}

function BrowserRow({ node }: { node: Node }) {
  const dots = 'mt-px border-t border-dotted border-[#999]';
  return (
    <li className="flex h-[18px] items-center whitespace-nowrap">
      {node.level === 0 && <><Toggle open root /><span className={`${dots} w-1`} /><Ico name="browser" /><span className="ml-[3px] bg-[#e3e3e3] px-[3px] leading-[18px]">{node.label}</span></>}
      {node.level === 1 && <><Guide /><span className="w-1 shrink-0" /><Toggle open={node.open} /><span className={`${dots} mr-px w-[9px] shrink-0`} /><span>{node.label}</span></>}
      {node.level === 2 && <><Guide /><span className="w-1 shrink-0" /><Guide /><span className="ml-3 h-[18px] w-px shrink-0 border-l border-dotted border-[#999]" /><span className={`${dots} mr-px w-2.5 shrink-0`} /><Ico name="sheet" /><span className="ml-1.5">{node.label}</span></>}
    </li>
  );
}

function ProjectBrowser() {
  return (
    <aside className="flex w-[211px] shrink-0 flex-col bg-[#eee]">
      <div className="flex h-5 shrink-0 items-center justify-between pr-1 pl-1 text-[#333]">
        <h2>Project Browser - 2</h2>
        <button aria-label="Close browser"><Cross /></button>
      </div>
      <div className="ml-0.5 flex min-h-0 flex-1">
        <ul className="min-w-0 flex-1 overflow-hidden bg-white">
          {browserNodes.map((n, i) => <BrowserRow key={i} node={n} />)}
        </ul>
        <div className="mr-px flex w-[15px] flex-col items-center bg-[#f0f0f0]">
          <span className="flex h-[17px] items-center"><Chevron dir="up" className="size-2.5" /></span>
          <div className="w-full flex-1"><div className="h-[82%] bg-[#cdcdcd]" /></div>
          <span className="flex h-[17px] items-center"><Chevron dir="down" className="size-2.5" /></span>
        </div>
      </div>
      <div className="flex h-[17px] shrink-0 items-center pr-4 pl-0.5">
        <span className="flex w-[17px] justify-center"><Chevron dir="left" className="size-2.5" /></span>
        <div className="h-[15px] flex-1"><div className="h-full w-[91%] bg-[#cdcdcd]" /></div>
        <span className="flex w-[17px] justify-center"><Chevron dir="right" className="size-2.5" /></span>
      </div>
    </aside>
  );
}

// --- 3D MODEL ---
const IX = 0.87;
const IY = 0.5;

// West corner at the roof, p runs to the south, q runs to the east
function Prism({ x, y, p, q, h }: { x: number; y: number; p: number; q: number; h: number }) {
  const s = [x + p * IX, y + p * IY];
  const e = [s[0] + q * IX, s[1] - q * IY];
  const n = [x + q * IX, y - q * IY];
  const lines: string[] = [];
  for (let f = 5; f < h; f += 6) lines.push(`M${s[0] + 1} ${s[1] + f}L${e[0] - 1} ${e[1] + f}`);
  return (
    <g>
      <path d={`M${x} ${y}L${s}v${h}L${x} ${y + h}z`} fill="#111213" stroke="#000" />
      <path d={`M${s}L${e}v${h}L${s[0]} ${s[1] + h}z`} fill="#48494b" stroke="#000" />
      <path d={lines.join('')} stroke="#000" strokeWidth="1.500" />
      <path d={`M${x + 2} ${y + 4}v${h - 5}M${(x + s[0]) / 2} ${(y + s[1]) / 2 + 3}v${h - 7}`} stroke="#4a4c50" strokeDasharray="3 3" />
      <path d={`M${x} ${y}L${s}L${e}L${n}z`} fill="#6f6e68" stroke="#000" />
      <path d={`M${(x + s[0]) / 2} ${(y + s[1]) / 2}L${(n[0] + e[0]) / 2} ${(n[1] + e[1]) / 2}M${(x + n[0]) / 2} ${(y + n[1]) / 2}L${(s[0] + e[0]) / 2} ${(s[1] + e[1]) / 2}`} stroke="#000" strokeWidth="0.800" />
    </g>
  );
}

function Block({ x, y, count, step, depth, h, rising, huts }: { x: number; y: number; count: number; step: number; depth: number; h: number; rising: boolean; huts: number[] }) {
  const order = Array.from({ length: count }, (_, i) => (rising ? count - 1 - i : i));
  return (
    <>
      {order.map((i) => {
        const jog = i % 2 ? 2 : 0;
        const bx = x + i * step * IX + jog;
        const by = y + (rising ? -1 : 1) * i * step * IY + (rising ? jog : -jog);
        return (
          <Fragment key={i}>
            <Prism x={bx} y={by} p={rising ? depth : step} q={rising ? step : depth} h={h} />
            {huts.includes(i) && <Prism x={bx + 6} y={by - 6} p={5} q={5} h={6} />}
          </Fragment>
        );
      })}
    </>
  );
}

function SiteModel() {
  return (
    <svg viewBox="225 198 907 484" className="h-full w-full" fill="none" shapeRendering="crispEdges" role="img" aria-label="3D site model">
      {/* ground */}
      <path d="M335 400L583 257l44 26C612 290 609 305 630 316L990 526l-38 22-75-41c-15-4-25-2-37 3L683 600l-45-26 11-7-254-149-12 9z" fill="#76756e" />
      <path d="M403 412L540 337l7 14-52 33-51 31z" fill="#a9aa9f" />
      <path d="M663 560l110-62c10-5 14-12 14-18l-22-2-107 60z" fill="#a9aa9f" />
      <path d="M440 408l50-26M667 532l90-50" stroke="#bbbcb6" strokeWidth="7" strokeDasharray="7 1" />
      <path d="M395 418l254 149" stroke="#222" strokeDasharray="2 1" />
      {/* lanes */}
      <g stroke="#bdbdbd" strokeDasharray="6 3">
        <path d="M344 405L593 262M350 409L600 265M354 411L604 268M364 419L613 275M369 421L618 278M373 424L622 281" />
        <path d="M612 316L985 531M616 311L989 527M605 320L978 534M585 328L962 544M588 324L966 541M580 332L958 547" />
        <path d="M645 578L790 495M650 581L796 498M668 592L815 508M673 595L820 511" />
        <path d="M346 406l-14 8m18-5l-14 8m36 5l-12 8m16-6l-12 8M592 262l16-9m-12 12l16-9M612 274l18-10m-14 13l18-10M650 580l-14 8m19-5l-14 8m30 4l-12 8m17-5l-12 8" />
      </g>
      {/* kerbs */}
      <g stroke="#f00" strokeWidth="1.200">
        <path d="M337 399L584 258M341 401L588 260M358 411L607 266M364 414L608 272M384 427L540 336c12-7 30-5 44 2L778 449c18 11 18 30-4 47L645 570" />
        <path d="M588 305c5 0 4 8 16 17L973 535M568 317c16 2 22 3 36 13L967 539M626 283c-17 8-18 24 2 32L990 525M952 548l-75-42c-16-5-26-3-40 4L683 600" />
        <path d="M660 587l130-75c19-10 22-16 24-37 1-5 3-4 7-1l31 18c-12 1-18 3-28 8L667 589M568 317l21-12" />
      </g>
      <path d="M335 400l49 27M583 257l49 27M990 526l-38 22M638 574l45 26M384 427l231-137M788 449l27 22M852 492l24 14M353 415l8-5 1 5 8-6M598 270l7-5 1 5M655 587l8-2 3 5 7-2M335 400l6-3M638 574l26-13" stroke="#000" strokeWidth="1.300" />
      {/* paths and plots */}
      <g stroke="#000">
        <path d="M400 412L538 333M405 414L542 338M414 425L648 562M428 431L588 524M405 424l145 6M400 420l110 14M447 438c20-12 30-11 55-10M484 430c10 10 8 22 0 34M488 430c10 10 8 22 0 34M484 464l28-16M487 467l28-16" />
        <path d="M470 428l67-32 30-8M455 420l36-22M548 338c14 30 22 70 30 84 20 35 50 40 95 40h50M558 338c14 30 18 60 28 78 18 34 50 42 90 43M562 338c14 30 18 56 28 74 18 34 50 44 90 44M570 340l20 42M588 352c-10 8-12 16-7 26M560 345l60 34M564 352l50 30M566 359l48 28M568 366l30 17M581 380l32 4M594 404l18-10M597 407l18-10" />
        <path d="M600 404l68 48 43-23M683 454l35-20M687 456l35-20M716 434c-4 8-4 14 0 20M722 434c-4 8-4 14 0 20M735 462l55 3M735 466l55 7M735 480l50-12M700 460l60-6M540 430c40 5 80 35 100 75M595 470c22 12 34 34 40 62M626 491l16 70M630 488l18 73M578 515l36-20M581 518l36-20M580 516c12-4 30-3 46 1M622 534l8 8-10-2z" />
        <path d="M500 470l78 46 28-16M467 414l15 12 70-38M606 394l70 45 25-15M650 515l17 12 80-46M780 449c10 7 14 14 13 24M776 500c-30 18-70 40-112 64" />
      </g>
      {/* paved walks */}
      <g strokeLinejoin="round">
        <path d="M404 414l60 7c30 4 66 9 88-3 14-8 18-17 15-30-4-16-12-34-18-51M659 563l-18-50c-7-20-1-34 20-42l28-6M736 471l52 7" stroke="#000" strokeWidth="13" />
        <path d="M404 414l60 7c30 4 66 9 88-3 14-8 18-17 15-30-4-16-12-34-18-51M659 563l-18-50c-7-20-1-34 20-42l28-6M736 471l52 7" stroke="#6a3840" strokeWidth="11" />
      </g>
      <path d="M578 403c14 32 48 52 102 58l-22 3c-42-6-72-25-85-52zM537 432c36-2 64 20 95 49l-6 10c-24-28-50-45-89-59z" fill="#dcdcd2" stroke="#000" />
      <path d="M550 345l12-6M553 352l12-6M556 359l12-6M559 366l12-6M650 461l20-12M605 478l22-14" stroke="#111" />
      {/* property line */}
      <path d="M408 421L546 342c10-5 20-4 30 1l46 28M700 417l55 31c20 12 24 28 12 41L649 560l-42-24M571 515l-21-12" stroke="#0f0" strokeWidth="1.300" strokeDasharray="9 2" />
      {/* buildings */}
      <Block x={470} y={394} count={8} step={9} depth={14} h={20} rising huts={[1, 5]} />
      <path d="M515 382l5-3v16l-5 2z" fill="#b8744c" />
      <Block x={611} y={382} count={8} step={10} depth={22} h={24} rising={false} huts={[1, 6]} />
      <Block x={507} y={437} count={8} step={10} depth={20} h={26} rising={false} huts={[2]} />
      <Block x={651} y={488} count={8} step={9} depth={18} h={26} rising huts={[]} />
      {/* view cube */}
      <g shapeRendering="auto">
        <ellipse cx="1070" cy="279" rx="38" ry="23" stroke="#eee" strokeWidth="10" />
        <ellipse cx="1070" cy="279" rx="43" ry="28" stroke="#ccc" strokeDasharray="4 2" />
        <ellipse cx="1070" cy="279" rx="33" ry="19" stroke="#ccc" strokeDasharray="4 2" />
        <ellipse cx="1070" cy="277" rx="26" ry="13" fill="#dedede" />
        <path d="M1034 293l8-5 3 7-8 5zM1094 292l9-3 4 6-8 4zM1038 258l8-4M1096 258l8 4" fill="#e6e6e6" stroke="#bbb" />
        <path d="M1047 247l23-11 24 11-24 13z" fill="#f6f6f6" stroke="#999" />
        <path d="M1047 247l23 13v28l-22-15z" fill="#ececec" stroke="#999" />
        <path d="M1094 247l-24 13v28l23-15z" fill="#e2e2e2" stroke="#999" />
        <g fontSize="6" fontWeight="700" fill="#a0a0a0" textAnchor="middle">
          <text x="1071" y="249" transform="rotate(12 1071 247)">TOP</text>
          <text x="1059" y="270" transform="rotate(30 1059 268)">FRONT</text>
          <text x="1082" y="270" transform="rotate(-30 1082 268)">RIGHT</text>
        </g>
      </g>
    </svg>
  );
}

const viewControls = ['detail', 'style', 'sun', 'shadow', 'render', 'crop', 'cropShow', 'lock3d', 'glasses', 'bulbOnly', 'temp', 'analytic', 'displace', 'constraint'];

function DrawingArea() {
  return (
    <main className="mx-0.5 flex min-w-0 flex-1 flex-col">
      <div className="flex h-5 shrink-0 items-center">
        <button className="flex h-full w-32 items-center pl-1 text-[#444]"><Ico name="section" /><span className="ml-2">Section 3</span></button>
        <div className="flex h-full w-32 items-center bg-white pr-[5px] pl-1">
          <button className="flex items-center font-semibold"><Ico name="house" /><span className="ml-2">{'{3D}'}</span></button>
          <button aria-label="Close view" className="ml-auto"><Cross /></button>
        </div>
        <button aria-label="Tab list" className="mr-1.5 ml-auto flex flex-col items-center gap-0.5"><span className="h-px w-2 bg-[#333]" /><Caret className="h-1 w-2" /></button>
      </div>
      <div className="flex min-h-0 flex-1 bg-white">
        <div className="relative min-w-0 flex-1 overflow-hidden">
          <SiteModel />
          <div role="tooltip" className="absolute top-[145px] left-[579px] w-[281px] border border-[#777] bg-white py-px pl-[5px] leading-[15px] text-[#575757] shadow-[3px_3px_1px_#999]">
            Click to select, TAB for alternates, CTRL adds, SHIFT<br />unselects.
          </div>
        </div>
        <div className="mt-0.5 mr-[3px] flex w-[15px] flex-col items-center bg-[#f0f0f0]">
          <span className="flex h-[17px] items-center"><Chevron dir="up" className="size-2.5" /></span>
          <div className="flex w-full flex-1 flex-col"><div className="h-[48%]" /><div className="h-[17px] bg-[#cdcdcd]" /></div>
          <span className="flex h-[17px] items-center"><Chevron dir="down" className="size-2.5" /></span>
        </div>
      </div>
      <div className="shrink-0 bg-white pr-0.5 pb-0.5 pl-0.5">
        <div className="flex h-[17px] items-center bg-[#efefef]">
          <button className="w-[76px] shrink-0 pl-6 text-left whitespace-nowrap">1 : 100</button>
          {viewControls.map((c) => <button key={c} aria-label={c} className="flex w-[21px] shrink-0 justify-center"><Ico name={c} /></button>)}
          <span className="flex w-4 shrink-0 justify-center"><Chevron dir="left" className="size-2.5" /></span>
          <div className="flex h-[15px] min-w-0 flex-1"><div className="w-[48%]" /><div className="w-[17px] bg-[#cdcdcd]" /></div>
          <span className="mr-1 flex w-[17px] justify-center"><Chevron dir="right" className="size-2.5" /></span>
          <svg viewBox="0 0 10 10" className="mr-0.5 size-2.5"><path d="M7 1h2v2H7zM4 4h2v2H4zM7 4h2v2H7zM1 7h2v2H1zM4 7h2v2H4zM7 7h2v2H7z" fill="#bbb" /></svg>
        </div>
      </div>
    </main>
  );
}

// --- STATUS BAR ---
const selectionTools = ['links', 'underlay', 'pinned', 'byFace', 'drag', 'gear'];

function StatusBar() {
  return (
    <div className="flex h-[27px] shrink-0 items-center pl-[5px]">
      <span className="w-[307px] shrink-0 whitespace-nowrap">Click to select, TAB for alternates, CTRL adds, SHIFT unselec</span>
      <button aria-label="Worksets" className="flex w-[31px] shrink-0 justify-center"><Ico name="worksets" /></button>
      <div className="relative shrink-0">
        <select aria-label="Active workset" className="block h-[18px] w-[204px] appearance-none bg-white"><option></option></select>
        <Chevron dir="down" className="pointer-events-none absolute top-1 right-0.5 size-2.5 opacity-50" />
      </div>
      <button className="ml-2 flex shrink-0 items-center gap-1"><Ico name="requests" />:0</button>
      <button aria-label="Design options" className="ml-[25px] shrink-0"><Ico name="options" /></button>
      <button aria-label="Pick to edit" className="ml-2.5 shrink-0"><Ico name="pick" /></button>
      <div className="relative ml-2 shrink-0">
        <select aria-label="Design option" disabled className="block h-[18px] w-[204px] appearance-none bg-white pl-0.5 text-[#8a8a8a] opacity-100"><option>Main Model</option></select>
        <Chevron dir="down" className="pointer-events-none absolute top-1 right-0.5 size-2.5 opacity-50" />
      </div>
      <div className="ml-auto flex items-center pr-5">
        {selectionTools.map((t) => <button key={t} aria-label={t} className="flex w-[26px] justify-center"><Ico name={t} /></button>)}
        <button className="flex items-center"><Ico name="filter" />:0</button>
        <span className="ml-[68px] h-5 w-px bg-[#bbb]" />
        <span className="ml-[7px] h-5 w-px bg-[#bbb]" />
      </div>
    </div>
  );
}

// --- TASKBAR ---
function Telegram() {
  return <svg viewBox="0 0 22 22" className="size-[22px]"><circle cx="11" cy="11" r="11" fill="#2a9fdc" /><path d="M4 11l13-5-2 11-4-3-2 2v-4l5-4-6 4z" fill="#fff" /></svg>;
}

function Chrome({ badge }: { badge?: boolean }) {
  return (
    <svg viewBox="0 0 26 26" className="size-[26px]">
      <circle cx="13" cy="13" r="12" fill="#34a04b" />
      <path d="M23.400 7A12 12 0 0 1 13 25l5.200-9L14 7z" fill="#fbc117" />
      <path d="M2.600 7A12 12 0 0 1 23.400 7.500H13L7.800 16z" fill="#e33b2e" />
      <circle cx="13" cy="13" r="6" fill="#fff" />
      <circle cx="13" cy="13" r="4.600" fill="#2f73e8" />
      {badge && <><circle cx="19" cy="19" r="7" fill="#ef3f6b" /><text x="16.500" y="22" fontSize="8" fill="#fff">S</text></>}
    </svg>
  );
}

const taskItems: { name: string; icon: ReactNode; state?: 'open' | 'active' }[] = [
  { name: 'Start', icon: <svg viewBox="0 0 16 16" className="size-4"><path d="M0 2l7-1v6.500H0zM8 1l8-1v7.500H8zM0 8.500h7V15l-7-1zM8 8.500h8V16l-8-1z" fill="#fff" /></svg> },
  { name: 'Search', icon: <svg viewBox="0 0 22 22" className="size-[22px]" fill="none"><circle cx="13" cy="8.500" r="7.500" stroke="#fff" strokeWidth="2" /><path d="M8 14l-7 7" stroke="#fff" strokeWidth="2.500" /></svg> },
  { name: 'Telegram', icon: <Telegram /> },
  { name: 'Reader', icon: <svg viewBox="0 0 22 17" className="h-[17px] w-[22px]"><path d="M0 0h22v17H0z" fill="#e5e9ec" /><path d="M0 0h22v2H0z" fill="#b3bcc4" /><path d="M6 3h9v11H6z" fill="#1b7fd6" /><path d="M2 5h2M2 8h2M2 11h2M17 5h3M17 8h3M17 11h3" stroke="#7a8792" /></svg> },
  { name: 'File Explorer', state: 'open', icon: <svg viewBox="0 0 22 19" className="h-[19px] w-[22px]"><path d="M0 1h8l2 2h12v15H0z" fill="#f6b637" /><path d="M0 6h22v12H0z" fill="#ffd978" /><path d="M4 18v-7h14v7h-4v-3H8v3z" fill="#3e8fd4" /></svg> },
  { name: 'Photoshop', state: 'open', icon: <span className="flex size-[21px] items-center justify-center border-2 border-[#2ba1f7] bg-[#041c33] font-semibold text-[#35a8ff]">Ps</span> },
  { name: 'InDesign', icon: <span className="flex size-[21px] items-center justify-center rounded bg-[#49021f] font-bold text-[#ff3d6e]">Id</span> },
  { name: 'Chrome profile', state: 'open', icon: <Chrome badge /> },
  { name: 'Chrome', icon: <Chrome /> },
  { name: 'Telegram Desktop', icon: <Telegram /> },
  { name: 'Revit', state: 'active', icon: <svg viewBox="0 0 21 24" className="h-6 w-[21px]"><path d="M0 2l3-2v18l-3-2z" fill="#5ba3e0" /><path d="M2 0h19v17H2z" fill="#1d74ff" /><path d="M2 16h19v8H2z" fill="#123f8c" /><text x="7.500" y="13" fontSize="13" fontWeight="700" fill="#fff">R</text><text x="7" y="22" fontSize="5" fontWeight="700" fill="#fff">RVT</text></svg> },
];

function Taskbar() {
  return (
    <footer className="flex h-10 shrink-0 items-stretch bg-[#722800] text-white">
      {taskItems.map((t) => (
        <button key={t.name} aria-label={t.name} className={`${t.state === 'active' ? 'bg-[#983302]' : ''} flex w-[49px] shrink-0 flex-col items-center`}>
          <span className="flex h-[38px] items-center">{t.icon}</span>
          {t.state && <span className={`${t.state === 'active' ? 'w-full' : 'w-10'} h-0.5 bg-[#fbc7a8]`} />}
        </button>
      ))}
      <div className="ml-auto flex items-center">
        <svg viewBox="0 0 12 8" className="h-2 w-3" fill="none"><path d="M1 7l5-5 5 5" stroke="#fff" strokeWidth="1.500" /></svg>
        <svg viewBox="0 0 16 16" className="ml-2.5 size-4"><circle cx="10" cy="5" r="4" fill="#ccc" stroke="#eee" /><circle cx="10" cy="5" r="1.500" fill="#666" /><path d="M1 12l8-3 5 2v3H3z" fill="#ddd" /></svg>
        <svg viewBox="0 0 16 16" className="ml-2 size-4" fill="none"><path d="M4 4h11v8H4z" stroke="#fff" /><path d="M6 6h7v4H6z" fill="#fff" /><path d="M1 2v2M4 2v2M0 5h5v2l-2 2v4" stroke="#fff" /></svg>
        <svg viewBox="0 0 16 16" className="ml-2 size-4" fill="none"><path d="M2 15A13 13 0 0 1 15 3M6 15a9 9 0 0 1 9-8M10 15a5 5 0 0 1 5-4" stroke="#b88a70" strokeWidth="1.300" /></svg>
        <svg viewBox="0 0 16 16" className="ml-1.5 size-4" fill="none"><path d="M1 6h3l4-4v12l-4-4H1zM10 6l4 4m0-4l-4 4" stroke="#fff" /></svg>
        <span className="ml-2.5">ENG</span>
        <time className="ml-3 text-center leading-[18px]">3:03 AM<br />10/3/2024</time>
        <button aria-label="Notifications" className="ml-[18px] h-[22px] w-[23px]">
          <svg viewBox="0 0 23 22" className="h-[22px] w-[23px]"><path d="M0 1h16v13H8l-4 3v-3H0z" fill="#fff" /><path d="M3 5h10M3 8h10M3 11h7" stroke="#722800" /><circle cx="15.500" cy="14" r="7" fill="#7a4528" stroke="#d6a58c" /><text x="13" y="18" fontSize="11" fill="#fff">1</text></svg>
        </button>
        <span className="ml-[13px] h-full w-px bg-[#9a6a52]" />
        <span className="w-1" />
      </div>
    </footer>
  );
}

export default function App() {
  return (
    <div className="relative flex h-screen flex-col overflow-hidden bg-[#cbcbcb] font-['Open_Sans','Noto_Sans',sans-serif] text-[11px] text-[#222]">
      <TitleBar />
      <Ribbon />
      <div className="flex min-h-0 flex-1 px-[3px] text-black">
        <Properties />
        <DrawingArea />
        <ProjectBrowser />
      </div>
      <StatusBar />
      <Taskbar />

      {/* Watermark */}
      <div className="pointer-events-none absolute bottom-3.5 left-[44%] flex flex-col items-start text-[#bdbdbd]/50">
        <span lang="ar" dir="rtl" className="font-['DejaVu_Sans',sans-serif] text-[54px] leading-[48px] font-bold">مستقل</span>
        <span className="font-['Liberation_Sans',Arial,sans-serif] text-[26px] leading-8 font-bold">mostaql.com</span>
      </div>
    </div>
  );
}
